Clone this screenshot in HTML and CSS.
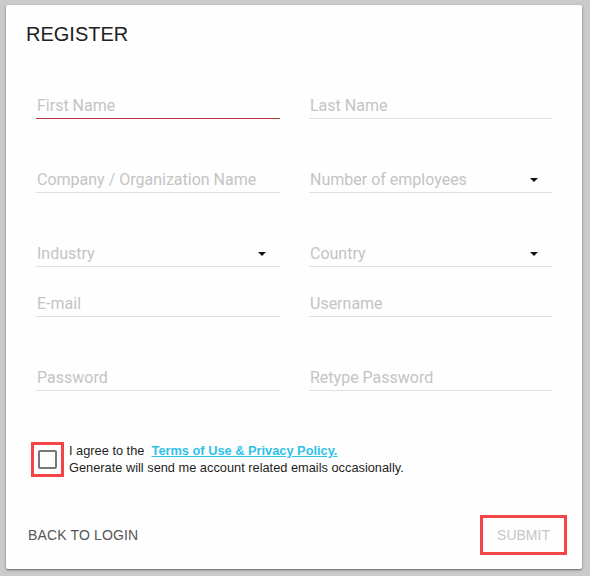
FILE: index.html
```html
<!DOCTYPE html>
<html>
<head>
<meta charset="utf-8">
<link rel="stylesheet" href="styles.css">
</head>
<body>
<div class="card">
  <h1 class="title">REGISTER</h1>
  <div class="row first">
    <div class="field focused"><span class="ph">First Name</span></div>
    <div class="field"><span class="ph">Last Name</span></div>
  </div>
  <div class="row">
    <div class="field"><span class="ph">Company / Organization Name</span></div>
    <div class="field select"><span class="ph">Number of employees</span><span class="caret"></span></div>
  </div>
  <div class="row tight">
    <div class="field select"><span class="ph">Industry</span><span class="caret"></span></div>
    <div class="field select"><span class="ph">Country</span><span class="caret"></span></div>
  </div>
  <div class="row">
    <div class="field"><span class="ph">E-mail</span></div>
    <div class="field"><span class="ph">Username</span></div>
  </div>
  <div class="row">
    <div class="field"><span class="ph">Password</span></div>
    <div class="field"><span class="ph">Retype Password</span></div>
  </div>
  <div class="agree">
    <div class="cb-wrap"><span class="cb"></span></div>
    <div class="agree-text">
      <div>I agree to the&nbsp; <a class="link" href="#">Terms of Use &amp; Privacy Policy.</a></div>
      <div>Generate will send me account related emails occasionally.</div>
    </div>
  </div>
  <div class="footer">
    <span class="back">BACK TO LOGIN</span>
    <span class="submit">SUBMIT</span>
  </div>
</div>
</body>
</html>
```
FILE: styles.css
```css
html, body {
  margin: 0;
  padding: 0;
  background: #cbcbcb;
}
body {
  width: 590px;
  height: 576px;
  overflow: hidden;
  font-family: Roboto, "Liberation Sans", sans-serif;
}
.card {
  box-sizing: border-box;
  margin: 5px 0 0 6px;
  width: 576px;
  height: 564px;
  background: #fefefe;
  border-radius: 2px;
  box-shadow: 0 1px 3px rgba(0,0,0,0.35), 0 1px 1px rgba(0,0,0,0.2);
  padding: 17px 30px 0 30px;
  display: flex;
  flex-direction: column;
}
.title {
  margin: 0 0 0 -10px;
  font-family: "Liberation Sans", Arial, sans-serif;
  font-weight: 400;
  font-size: 20px;
  line-height: 24px;
  color: #212121;
}
.row {
  display: flex;
  gap: 29px;
  margin-top: 51px;
}
.row.first { margin-top: 50px; }
.row.tight + .row { margin-top: 27px; }
.field {
  position: relative;
  flex: 0 0 244px;
  box-sizing: border-box;
  height: 23px;
  border-bottom: 1px solid #e0e0e0;
  padding: 0 0 0 1px;
}
.field + .field { flex-basis: 243px; }
.field.focused { border-bottom-color: #b8393c; }
.ph {
  font-size: 16px;
  line-height: 19px;
  color: #c4c4c4;
  display: block;
}
.caret {
  position: absolute;
  right: 14px;
  top: 8px;
  width: 0;
  height: 0;
  border-left: 4px solid transparent;
  border-right: 4px solid transparent;
  border-top: 4px solid #111;
}
.agree {
  display: flex;
  align-items: flex-start;
  margin-top: 51px;
  margin-left: -5px;
}
.cb-wrap {
  box-sizing: border-box;
  width: 33px;
  height: 35px;
  border: 3px solid #f34447;
  display: flex;
  align-items: center;
  justify-content: center;
}
.cb {
  box-sizing: border-box;
  width: 19px;
  height: 19px;
  border: 2px solid #767676;
  border-radius: 2px;
}
.agree-text {
  font-family: "Liberation Sans", Arial, sans-serif;
  font-size: 12.8px;
  line-height: 17px;
  color: #1e1e1e;
  margin-left: 5px;
}
.link {
  color: #2fc1e8;
  font-weight: 700;
  text-decoration: underline;
}
.footer {
  display: flex;
  justify-content: space-between;
  align-items: center;
  margin-top: 38px;
  margin-left: -8px;
  margin-right: -15px;
  font-family: "Liberation Sans", Arial, sans-serif;
}
.back {
  font-size: 14px;
  color: #555;
  letter-spacing: 0.15px;
}
.submit {
  box-sizing: border-box;
  width: 87px;
  height: 40px;
  border: 3px solid #f34447;
  display: flex;
  align-items: center;
  justify-content: center;
  font-size: 14px;
  color: #c6c6c6;
}
```
